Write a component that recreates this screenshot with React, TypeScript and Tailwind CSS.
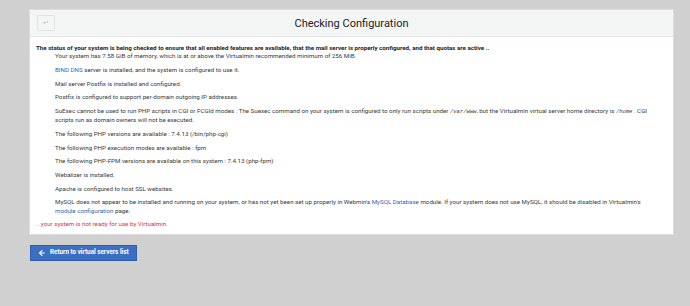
import { ArrowLeft } from "lucide-react";

const checks: React.ReactNode[] = [
  <>
    Your system has 7.58 GiB of memory, which is at or above the Virtualmin
    recommended minimum of 256 MiB.
  </>,
  <>
    <a className="text-[#3567b3]">BIND DNS</a> server is installed, and the
    system is configured to use it.
  </>,
  <>Mail server Postfix is installed and configured.</>,
  <>Postfix is configured to support per-domain outgoing IP addresses.</>,
  <>
    SuExec cannot be used to run PHP scripts in CGI or FCGId modes : The Suexec
    command on your system is configured to only run scripts under{" "}
    <code className="font-['Liberation_Mono',monospace] italic text-[5.5px]">
      /var/www
    </code>
    , but the Virtualmin virtual server home directory is{" "}
    <code className="font-['Liberation_Mono',monospace] italic text-[5.5px]">
      /home
    </code>{" "}
    . CGI scripts run as domain owners will not be executed.
  </>,
  <>The following PHP versions are available : 7.4.13 (/bin/php-cgi)</>,
  <>The following PHP execution modes are available : fpm</>,
  <>
    The following PHP-FPM versions are available on this system : 7.4.13
    (php-fpm)
  </>,
  <>Webalizer is installed.</>,
  <>Apache is configured to host SSL websites.</>,
  <>
    MySQL does not appear to be installed and running on your system, or has
    not yet been set up properly in Webmin&apos;s{" "}
    <a className="text-[#3567b3]">MySQL Database</a> module. If your system
    does not use MySQL, it should be disabled in Virtualmin&apos;s{" "}
    <a className="text-[#3567b3]">module configuration</a> page.
  </>,
];

export default function App() {
  return (
    <div className="min-h-[306px] bg-[#cfd0cf] pt-[9px] pl-[29px] font-['Roboto',sans-serif]">
      <div className="w-[645px] bg-white border border-[#dcdcdc]">
        <div className="grid grid-cols-[1fr_auto_1fr] items-center h-[27px] bg-[#f4f5f5] border-b border-[#e6e6e6] px-[7px]">
          <div>
            <button className="flex items-center justify-center w-[18px] h-[16px] border border-[#e2e2e2] bg-[#f4f5f5] rounded-[1px] text-[#c4c4c4] text-[7px]">
              ↵
            </button>
          </div>
          <h1 className="text-[11px] text-[#222] leading-none">
            Checking Configuration
          </h1>
          <div />
        </div>
        <div className="pl-[6px] pr-[14px] pt-[7px] pb-[5px] text-[6.2px] leading-[8.3px] text-[#3a3a3a]">
          <p className="font-bold text-[#222]">
            The status of your system is being checked to ensure that all
            enabled features are available, that the mail server is properly
            configured, and that quotas are active ..
          </p>
          <div className="pl-[19px] flex flex-col gap-[5.4px]">
            {checks.map((c, i) => (
              <p key={i}>{c}</p>
            ))}
          </div>
          <p className="mt-[5.4px] text-[#e0323c]">
            .. your system is not ready for use by Virtualmin.
          </p>
        </div>
      </div>
      <button className="mt-[10px] ml-[1px] flex items-center gap-[4px] h-[16px] px-[7px] bg-[#3a6fc4] border border-[#2e5fae] text-white text-[6.3px] font-bold">
        <ArrowLeft size={8} strokeWidth={3.5} />
        Return to virtual servers list
      </button>
    </div>
  );
}
